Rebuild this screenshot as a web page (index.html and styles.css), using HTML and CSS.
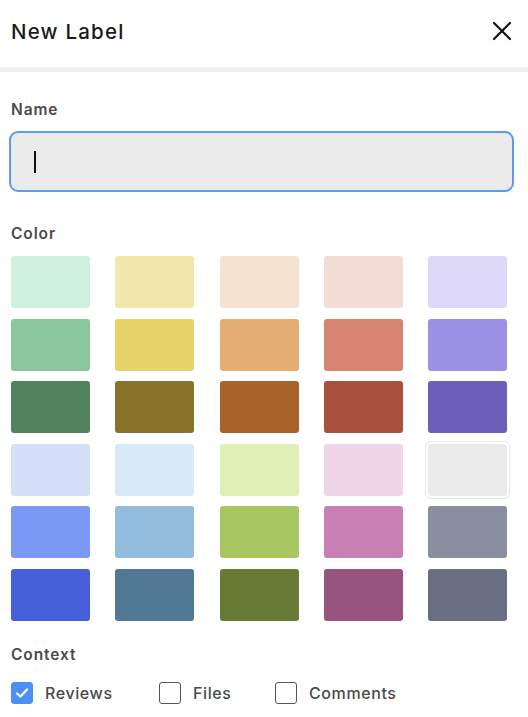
FILE: index.html
```html
<!DOCTYPE html>
<html>
<head>
<meta charset="utf-8">
<link rel="stylesheet" href="styles.css">
</head>
<body>
<div class="dialog">
  <header class="header">
    <h1 class="title">New Label</h1>
    <button class="close" aria-label="Close">
      <svg width="20" height="20" viewBox="0 0 20 20"><path d="M2 2L18 18M18 2L2 18" stroke="#111" stroke-width="2.2" stroke-linecap="round"/></svg>
    </button>
  </header>
  <div class="body">
    <div class="section-label name-label">Name</div>
    <div class="input"><span class="caret"></span></div>
    <div class="section-label color-label">Color</div>
    <div class="grid">
      <div class="sw" style="background:#cff0de"></div>
      <div class="sw" style="background:#f1e7ad"></div>
      <div class="sw" style="background:#f5e2cf"></div>
      <div class="sw" style="background:#f3dcd6"></div>
      <div class="sw" style="background:#ddd8f8"></div>

      <div class="sw" style="background:#8bc79c"></div>
      <div class="sw" style="background:#e8d36b"></div>
      <div class="sw" style="background:#e4ae73"></div>
      <div class="sw" style="background:#d68570"></div>
      <div class="sw" style="background:#9d91e5"></div>

      <div class="sw" style="background:#54815e"></div>
      <div class="sw" style="background:#88732b"></div>
      <div class="sw" style="background:#a8622a"></div>
      <div class="sw" style="background:#a9513d"></div>
      <div class="sw" style="background:#6d5eba"></div>

      <div class="sw" style="background:#d5dff9"></div>
      <div class="sw" style="background:#d6eaf8"></div>
      <div class="sw" style="background:#dff0b4"></div>
      <div class="sw" style="background:#f0d5ea"></div>
      <div class="sw selected" style="background:#ebebeb"></div>

      <div class="sw" style="background:#7b98f5"></div>
      <div class="sw" style="background:#93bcdd"></div>
      <div class="sw" style="background:#a8c662"></div>
      <div class="sw" style="background:#c981b5"></div>
      <div class="sw" style="background:#898f9f"></div>

      <div class="sw" style="background:#465fdb"></div>
      <div class="sw" style="background:#517895"></div>
      <div class="sw" style="background:#677a36"></div>
      <div class="sw" style="background:#96547f"></div>
      <div class="sw" style="background:#686f82"></div>
    </div>
    <div class="section-label context-label">Context</div>
    <div class="checks">
      <label class="check reviews"><span class="box checked"><svg width="14" height="12" viewBox="0 0 14 12"><path d="M2 6.5L5.5 9.5L12 2.5" fill="none" stroke="#fff" stroke-width="2.2" stroke-linecap="round" stroke-linejoin="round"/></svg></span>Reviews</label>
      <label class="check files"><span class="box"></span>Files</label>
      <label class="check comments"><span class="box"></span>Comments</label>
    </div>
  </div>
</div>
</body>
</html>
```

FILE: styles.css
```css
* { box-sizing: border-box; }
html, body { margin: 0; padding: 0; background: #fff; }
body {
  font-family: Inter, "Noto Sans", "Liberation Sans", sans-serif;
  color: #222;
  width: 528px;
  height: 717px;
  overflow: hidden;
}
.header {
  height: 72px;
  display: flex;
  align-items: center;
  justify-content: space-between;
  padding: 0 16px 5px 11px;
  border-bottom: 5px solid #f0f0f0;
}
.title {
  margin: 0;
  font-size: 20.5px;
  font-weight: 500;
  color: #1a1a1a;
  letter-spacing: 1.2px;
}
.close {
  border: 0;
  background: none;
  padding: 0;
  width: 20px;
  height: 20px;
  display: block;
}
.close svg { display: block; }
.body { padding: 0 14px 0 9px; }
.section-label {
  font-size: 15.5px;
  font-weight: 600;
  color: #4a4a4a;
  padding-left: 2px;
  letter-spacing: 0.9px;
  line-height: 18px;
}
.name-label { margin-top: 29px; }
.input {
  margin-top: 12px;
  height: 61px;
  border: 2px solid #5b9bf5;
  border-radius: 9px;
  background: #ebebeb;
  display: flex;
  align-items: center;
  padding-left: 23px;
}
.caret {
  width: 1.5px;
  height: 22px;
  background: #111;
}
.color-label { margin-top: 33px; }
.grid {
  margin-top: 13px;
  margin-left: 2px;
  width: 496px;
  display: grid;
  grid-template-columns: repeat(5, 79px);
  column-gap: 25.25px;
  row-gap: 10.5px;
}
.sw {
  height: 52px;
  border-radius: 3px;
}
.sw.selected {
  box-shadow: 0 0 0 2px #fff, 0 0 0 3px #e8e8e8;
}
.context-label { margin-top: 25px; }
.checks {
  margin-top: 18px;
  margin-left: 2px;
  display: flex;
  align-items: center;
}
.check {
  display: flex;
  align-items: center;
  font-size: 16px;
  font-weight: 500;
  color: #4a4a4a;
  letter-spacing: 0.6px;
}
.box {
  width: 22px;
  height: 22px;
  border: 1.5px solid #555;
  border-radius: 3px;
  margin-right: 12px;
  display: flex;
  align-items: center;
  justify-content: center;
  background: #fff;
}
.box.checked {
  background: #4d90f4;
  border-color: #4d90f4;
}
.reviews { width: 148px; }
.files { width: 116px; }
```
